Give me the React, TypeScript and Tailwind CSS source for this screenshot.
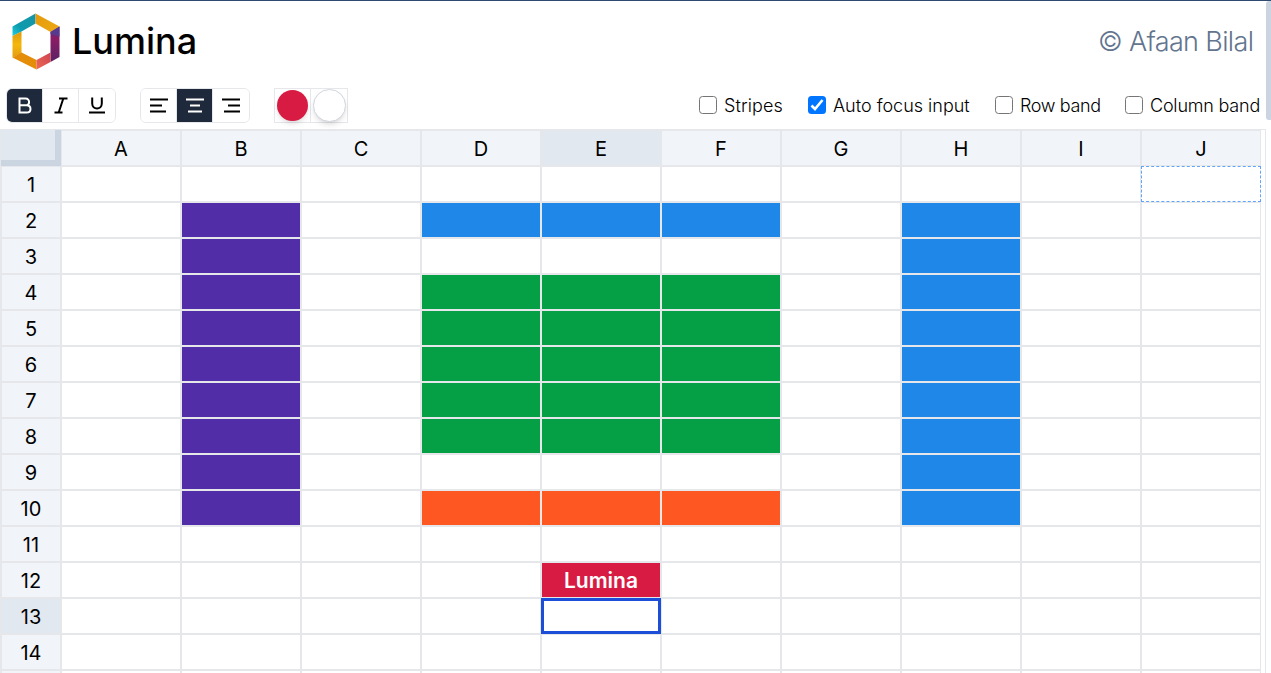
import type { ReactNode } from 'react';

const COLS = ['A', 'B', 'C', 'D', 'E', 'F', 'G', 'H', 'I', 'J'];
const ROWS = Array.from({ length: 14 }, (_, i) => i + 1);

function fillFor(col: string, row: number): string {
  if (row >= 2 && row <= 10) {
    if (col === 'B') return 'bg-[#512da8]';
    if (col === 'H') return 'bg-[#1f87e8]';
  }
  if (col === 'D' || col === 'E' || col === 'F') {
    if (row === 2) return 'bg-[#1f87e8]';
    if (row >= 4 && row <= 8) return 'bg-[#05a045]';
    if (row === 10) return 'bg-[#ff5722]';
  }
  if (col === 'E' && row === 12) return 'bg-[#d81b43]';
  return 'bg-white';
}

function Logo() {
  return (
    <svg width="48" height="58" viewBox="0 0 48 58" className="mt-[2px] shrink-0">
      <defs>
        <linearGradient id="teal" x1="0" y1="1" x2="1" y2="0">
          <stop offset="0" stopColor="#1fd0e2" />
          <stop offset="0.35" stopColor="#0d9bae" />
          <stop offset="1" stopColor="#1795a5" />
        </linearGradient>
        <linearGradient id="gold" x1="0" y1="0" x2="1" y2="1">
          <stop offset="0" stopColor="#e39a0c" />
          <stop offset="1" stopColor="#eea914" />
        </linearGradient>
        <linearGradient id="amber" x1="0" y1="0" x2="0" y2="1">
          <stop offset="0" stopColor="#dc970f" />
          <stop offset="0.5" stopColor="#f5b70c" />
          <stop offset="1" stopColor="#e49d15" />
        </linearGradient>
        <linearGradient id="plum" x1="0" y1="0" x2="0" y2="1">
          <stop offset="0" stopColor="#5a2d7c" />
          <stop offset="0.35" stopColor="#8b1c65" />
          <stop offset="1" stopColor="#5a2164" />
        </linearGradient>
        <linearGradient id="coral" x1="0" y1="1" x2="1" y2="0">
          <stop offset="0" stopColor="#ed6a55" />
          <stop offset="1" stopColor="#cf4351" />
        </linearGradient>
      </defs>
      <path d="M0.500 13.500 23.500 0.500V10.500L9.500 18.500 0.500 23Z" fill="url(#teal)" />
      <path d="M23.500 0.500 47.500 13.500 38.500 19 23.500 10.500Z" fill="url(#gold)" />
      <path d="M0.500 23 9.500 18.500V40L0.500 44.500Z" fill="url(#amber)" />
      <path d="M0.500 44.500 9.500 39.500 24.500 47V56.500Z" fill="#e48d08" />
      <path d="M38.500 19 47.500 13.500V44L38.500 49Z" fill="url(#plum)" />
      <path d="M38.500 19 47.500 13.500V23.500L38.500 21Z" fill="#563a8e" />
      <path d="M24.500 47 38.500 39.500V49L24.500 56.500Z" fill="url(#coral)" />
    </svg>
  );
}

function Tool({ active = false, last = false, children }: { active?: boolean; last?: boolean; children: ReactNode }) {
  return (
    <button
      className={`flex h-[33px] w-9 items-center justify-center ${last ? '' : 'border-r border-gray-200'} ${
        active ? 'bg-[#1e293b] text-white' : 'bg-white text-black'
      }`}
    >
      <svg width="22" height="24" viewBox="0 0 22 24" fill="none" stroke="currentColor" strokeWidth="2">
        {children}
      </svg>
    </button>
  );
}

function Check({ label, checked = false, text }: { label: string; checked?: boolean; text: string }) {
  return (
    <label className="flex items-center">
      <span
        className={`mr-[7px] flex size-[18px] items-center justify-center rounded-[3.500px] ${
          checked ? 'bg-[#0075ff]' : 'border-[1.500px] border-[#767676] bg-white'
        }`}
      >
        {checked && (
          <svg width="18" height="18" viewBox="0 0 18 18" fill="none" stroke="white" strokeWidth="2.600">
            <path d="M3.500 9.500 7 13 14.500 4" />
          </svg>
        )}
      </span>
      <span className={`whitespace-nowrap pt-[2px] text-[18px] font-light leading-6 ${text}`}>{label}</span>
    </label>
  );
}

export default function App() {
  return (
    <div className="flex h-[673px] w-[1271px] overflow-hidden border-t border-[#2f4a70] bg-white font-['Inter',sans-serif] text-black">
      <div className="flex w-[1266px] shrink-0 flex-col">
        <header className="flex h-[80px] shrink-0 items-center justify-between pl-3 pr-3">
          <div className="flex items-center">
            <Logo />
            <h1 className="ml-[12px] w-[126px] whitespace-nowrap text-[36px] font-medium leading-10">Lumina</h1>
          </div>
          <span className="w-[156px] whitespace-nowrap pt-[2px] text-[27px] font-light leading-8 tracking-[-0.650px] text-slate-500">
            © Afaan Bilal
          </span>
        </header>

        <div className="flex h-[48px] shrink-0 items-start justify-between pl-[7px] pt-[7px]">
          <div className="flex">
            <div className="-ml-px flex overflow-hidden rounded-md border border-gray-200">
              <Tool active>
                <path d="M5.500 4.500V18.500H12.500C17.800 18.500 17.800 11.300 12.500 11.300H5.500H11.500C16.300 11.300 16.300 4.500 11.500 4.500Z" />
              </Tool>
              <Tool>
                <path d="M9 4.500H17.500M4.500 18.500H12.500M13.300 4.500 8.700 18.500" />
              </Tool>
              <Tool last>
                <path d="M6.200 3.500V9.500C6.200 16 15.800 16 15.800 9.500V3.500M3 18.500H19" />
              </Tool>
            </div>
            <div className="ml-6 flex overflow-hidden rounded-md border border-gray-200">
              <Tool>
                <path d="M2 5.500H20M2 11.500H14M2 17.500H18" />
              </Tool>
              <Tool active>
                <path d="M2 5.500H20M6 11.500H16M4 17.500H18" />
              </Tool>
              <Tool last>
                <path d="M2 5.500H20M8 11.500H20M4 17.500H20" />
              </Tool>
            </div>
            <div className="ml-6 flex border border-gray-200">
              <div className="flex h-[33px] w-9 items-center justify-center border-r border-gray-200">
                <span className="size-[31px] shrink-0 rounded-full bg-[#d81b43] shadow-md" />
              </div>
              <div className="flex h-[33px] w-9 items-start justify-center">
                <span className="size-[33px] shrink-0 rounded-full border border-gray-300 bg-white shadow-md" />
              </div>
            </div>
          </div>
          <div className="flex h-[34px] items-center gap-6 pr-[6px]">
            <Check label="Stripes" text="w-[60px] tracking-[0.100px]" />
            <Check label="Auto focus input" checked text="w-[138px]" />
            <Check label="Row band" text="w-[81px] tracking-[-0.350px]" />
            <Check label="Column band" text="w-[110px] tracking-[-0.200px]" />
          </div>
        </div>

        <main className="flex flex-1 flex-col overflow-hidden border border-b-0 border-gray-200 text-[20px] leading-7">
          <div className="flex shrink-0">
            <div className="h-9 w-[60px] shrink-0 border-b-[6px] border-r-[6px] border-[#cbd5e1] bg-slate-200" />
            {COLS.map((c) => (
              <div
                key={c}
                className={`flex h-9 w-[120px] shrink-0 items-center justify-center border border-gray-200 pt-[2px] ${
                  c === 'E' ? 'bg-slate-200' : 'bg-slate-100'
                }`}
              >
                {c}
              </div>
            ))}
          </div>
          {ROWS.map((r) => (
            <div key={r} className="flex shrink-0">
              <div
                className={`flex h-9 w-[60px] shrink-0 items-center justify-center border border-gray-200 pt-[2px] ${
                  r === 13 ? 'bg-slate-200' : 'bg-slate-100'
                }`}
              >
                {r}
              </div>
              {COLS.map((c) => {
                const outline =
                  c === 'E' && r === 13
                    ? 'border-[3px] border-[#1d4ed8]'
                    : c === 'J' && r === 1
                      ? 'border border-dashed border-[#60a5fa]'
                      : 'border border-gray-200';
                return (
                  <div key={c} className={`flex h-9 w-[120px] shrink-0 items-center justify-center ${outline} ${fillFor(c, r)}`}>
                    {c === 'E' && r === 12 && (
                      <span className="pt-[2px] text-[21px] font-semibold text-white">Lumina</span>
                    )}
                  </div>
                );
              })}
            </div>
          ))}
          <div className="flex shrink-0">
            <div className="h-9 w-[60px] shrink-0 border border-gray-200 bg-slate-100" />
            {COLS.map((c) => (
              <div key={c} className="h-9 w-[120px] shrink-0 border border-gray-200" />
            ))}
          </div>
        </main>
      </div>
      <div className="h-[119px] w-[5px] rounded-l-[3px] bg-[#cbd5e1]" />
    </div>
  );
}
